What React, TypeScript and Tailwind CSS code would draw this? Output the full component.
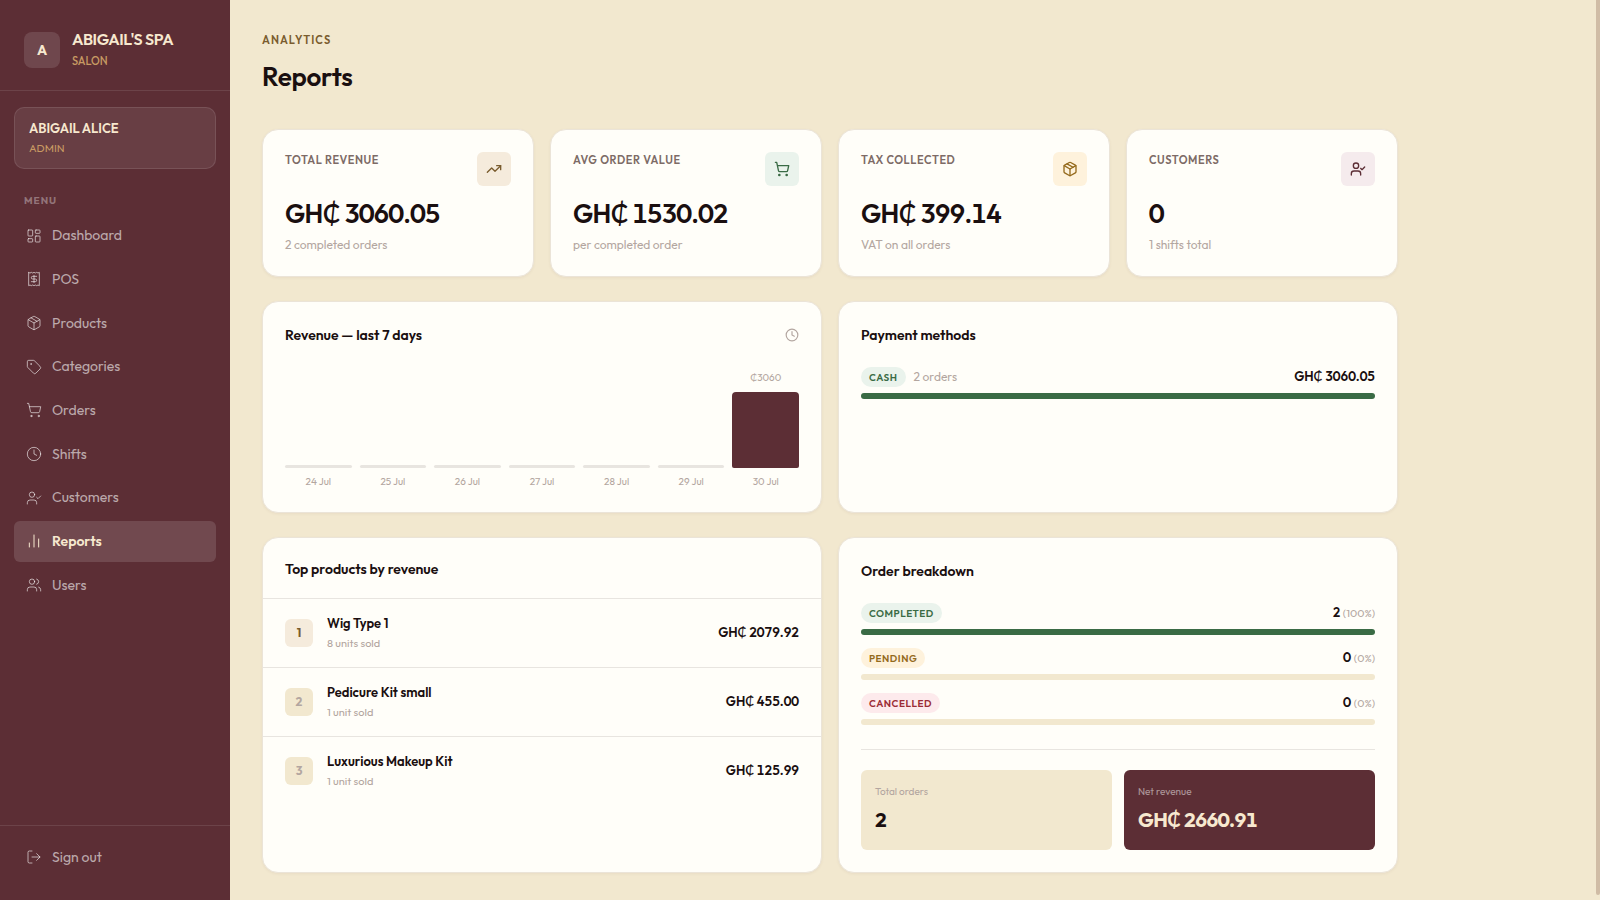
import type { LucideIcon } from 'lucide-react';
import {
  ChartNoAxesColumn,
  Clock,
  LayoutDashboard,
  LogOut,
  Package,
  Receipt,
  ShoppingCart,
  Tag,
  TrendingUp,
  UserCheck,
  Users,
} from 'lucide-react';

interface NavItem {
  label: string;
  icon: LucideIcon;
  active?: boolean;
}

const navItems: NavItem[] = [
  { label: 'Dashboard', icon: LayoutDashboard },
  { label: 'POS', icon: Receipt },
  { label: 'Products', icon: Package },
  { label: 'Categories', icon: Tag },
  { label: 'Orders', icon: ShoppingCart },
  { label: 'Shifts', icon: Clock },
  { label: 'Customers', icon: UserCheck },
  { label: 'Reports', icon: ChartNoAxesColumn, active: true },
  { label: 'Users', icon: Users },
];

const stats = [
  {
    label: 'Total revenue',
    value: 'GH₵ 3060.05',
    sub: '2 completed orders',
    icon: TrendingUp,
    tone: 'bg-[#f5ebdc] text-[#7a5c2e]',
  },
  {
    label: 'Avg order value',
    value: 'GH₵ 1530.02',
    sub: 'per completed order',
    icon: ShoppingCart,
    tone: 'bg-[#eaf3ec] text-[#3a6b45]',
  },
  {
    label: 'Tax collected',
    value: 'GH₵ 399.14',
    sub: 'VAT on all orders',
    icon: Package,
    tone: 'bg-[#fef2dc] text-[#946a1c]',
  },
  {
    label: 'Customers',
    value: '0',
    sub: '1 shifts total',
    icon: UserCheck,
    tone: 'bg-[#f5ebed] text-[#5c2e35]',
  },
];

const days = [
  { day: '24 Jul', total: 0 },
  { day: '25 Jul', total: 0 },
  { day: '26 Jul', total: 0 },
  { day: '27 Jul', total: 0 },
  { day: '28 Jul', total: 0 },
  { day: '29 Jul', total: 0 },
  { day: '30 Jul', total: 3060 },
];

const products = [
  { name: 'Wig Type 1', sold: '8 units sold', revenue: 'GH₵ 2079.92' },
  { name: 'Pedicure Kit small', sold: '1 unit sold', revenue: 'GH₵ 455.00' },
  { name: 'Luxurious Makeup Kit', sold: '1 unit sold', revenue: 'GH₵ 125.99' },
];

const statuses = [
  { label: 'Completed', count: 2, percent: 100, tone: 'bg-[#eaf3ec] text-[#3a6b45]' },
  { label: 'Pending', count: 0, percent: 0, tone: 'bg-[#fef2dc] text-[#946a1c]' },
  { label: 'Cancelled', count: 0, percent: 0, tone: 'bg-[#fdeaec] text-[#9b2c35]' },
];

const card = 'rounded-2xl border border-[#ebe4d8] bg-[#fffef9] shadow-[0_1px_3px_rgba(92,46,53,0.06)]';

function Badge({ label, tone }: { label: string; tone: string }) {
  return (
    <span className={`flex h-5 items-center rounded-full px-2 text-[10px] font-semibold uppercase tracking-wider ${tone}`}>
      {label}
    </span>
  );
}

function Bar({ percent }: { percent: number }) {
  return (
    <div className="h-1.5 overflow-hidden rounded-[3px] bg-[#f2e8cf]">
      <div className="h-full bg-[#3a6b45]" style={{ width: `${percent}%` }} />
    </div>
  );
}

function Sidebar() {
  return (
    <aside className="sticky top-0 flex h-screen w-[230px] shrink-0 flex-col bg-[#5c2e35]">
      <div className="flex items-center gap-3 border-b border-white/10 px-6 pt-7 pb-[18px]">
        <div className="flex size-9 items-center justify-center rounded-lg bg-white/12 text-[14px] font-bold text-[#f7e8cf]">
          A
        </div>
        <div>
          <div className="text-[16px] leading-[22px] font-semibold tracking-tight text-[#f7e8cf]">ABIGAIL'S SPA</div>
          <div className="text-[11px] leading-[22px] font-medium text-[#c79a63]">SALON</div>
        </div>
      </div>

      <div className="mx-3.5 mt-4 rounded-[10px] border border-white/10 bg-white/8 px-3.5 py-2.5">
        <div className="text-[13px] leading-5 font-semibold text-[#f7e8cf]">ABIGAIL ALICE</div>
        <div className="text-[11px] leading-5 text-[#c79a63]">ADMIN</div>
      </div>

      <div className="mt-6 px-6 text-[10px] leading-[15px] font-bold tracking-widest text-white/35">MENU</div>
      <nav className="mt-[7px] grid min-h-[391px] auto-rows-fr gap-0.5 px-3.5">
        {navItems.map(({ label, icon: Icon, active }) => (
          <a
            key={label}
            href="#"
            className={`flex items-center gap-2.5 rounded-md px-3 text-[14px] ${
              active ? 'bg-white/13 font-semibold text-[#f7e8cf]' : 'text-white/60'
            }`}
          >
            <Icon size={16} strokeWidth={1.5} />
            {label}
          </a>
        ))}
      </nav>

      <div className="mt-auto border-t border-white/10 px-3.5 pt-2.5 pb-[22px]">
        <button className="flex h-[42px] w-full items-center gap-2.5 rounded-md px-3 text-[14px] text-white/60">
          <LogOut size={16} strokeWidth={1.5} />
          Sign out
        </button>
      </div>
    </aside>
  );
}

function RevenueChart() {
  const max = Math.max(...days.map((d) => d.total));

  return (
    <section className={`${card} p-[22px]`}>
      <div className="flex h-[22px] items-center justify-between">
        <h2 className="text-[14px] font-semibold">Revenue — last 7 days</h2>
        <Clock size={14} strokeWidth={2} className="text-[#b3a6a0]" />
      </div>
      <div className="mt-5 flex h-[124px] items-end gap-2 text-[10px] text-[#b3a6a0]">
        {days.map(({ day, total }) => (
          <div key={day} className="flex flex-1 flex-col text-center">
            {total > 0 && <span className="mb-1.5 leading-4">₵{total}</span>}
            <div
              className={total > 0 ? 'rounded-t-[4px] rounded-b-[2px] bg-[#5c2e35]' : 'rounded-[2px] bg-[#e8e5e0]'}
              style={{ height: Math.max(3, (total / max) * 76) }}
            />
            <span className="mt-1.5 leading-4">{day}</span>
          </div>
        ))}
      </div>
    </section>
  );
}

function PaymentMethods() {
  return (
    <section className={`${card} p-[22px]`}>
      <h2 className="text-[14px] leading-[22px] font-semibold">Payment methods</h2>
      <div className="mt-[21px] mb-1.5 flex h-5 items-center gap-2">
        <Badge label="Cash" tone="bg-[#eaf3ec] text-[#3a6b45]" />
        <span className="text-[12px] text-[#b3a6a0]">2 orders</span>
        <span className="ml-auto text-[13px] font-semibold tabular-nums">GH₵ 3060.05</span>
      </div>
      <Bar percent={100} />
    </section>
  );
}

function TopProducts() {
  return (
    <section className={`${card} overflow-hidden`}>
      <h2 className="px-[22px] pt-[21px] pb-[18px] text-[14px] leading-[21px] font-semibold">Top products by revenue</h2>
      <ol>
        {products.map(({ name, sold, revenue }, i) => (
          <li key={name} className="flex items-center gap-3.5 border-t border-[#e8e5e0] px-[22px] py-3.5">
            <span
              className={`flex size-7 items-center justify-center rounded-md text-[12px] font-bold ${
                i === 0 ? 'bg-[#f5ebdc] text-[#7a5c2e]' : 'bg-[#f2e8cf] text-[#b3a6a0]'
              }`}
            >
              {i + 1}
            </span>
            <div>
              <div className="text-[13px] leading-5 font-semibold">{name}</div>
              <div className="text-[11px] leading-5 text-[#b3a6a0]">{sold}</div>
            </div>
            <span className="ml-auto text-[13px] font-semibold tabular-nums">{revenue}</span>
          </li>
        ))}
      </ol>
    </section>
  );
}

function OrderBreakdown() {
  return (
    <section className={`${card} p-[22px]`}>
      <h2 className="text-[14px] leading-[22px] font-semibold">Order breakdown</h2>
      <div className="mt-[21px] flex flex-col gap-[13px]">
        {statuses.map(({ label, count, percent, tone }) => (
          <div key={label}>
            <div className="mb-1.5 flex h-5 items-center justify-between">
              <Badge label={label} tone={tone} />
              <span className="text-[13px] font-semibold">
                {count} <span className="text-[11px] font-normal text-[#b3a6a0]">({percent}%)</span>
              </span>
            </div>
            <Bar percent={percent} />
          </div>
        ))}
      </div>
      <div className="mt-6 grid grid-cols-2 gap-3 border-t border-[#e8e5e0] pt-5">
        <div className="rounded-md bg-[#f2e8cf] px-3.5 pt-3 pb-3.5">
          <div className="text-[10px] leading-5 text-[#b3a6a0]">Total orders</div>
          <div className="mt-0.5 text-[20px] leading-8 font-bold tabular-nums">2</div>
        </div>
        <div className="rounded-md bg-[#5c2e35] px-3.5 pt-3 pb-3.5">
          <div className="text-[10px] leading-5 text-white/50">Net revenue</div>
          <div className="mt-0.5 text-[20px] leading-8 font-bold tracking-tight text-[#f7e8cf] tabular-nums">GH₵ 2660.91</div>
        </div>
      </div>
    </section>
  );
}

export default function App() {
  return (
    <div className="flex min-h-screen bg-[#f2e8cf] font-[Outfit,Lato,sans-serif] text-[#1a0f10]">
      <Sidebar />
      <main className="min-w-0 flex-1">
        <div className="max-w-[1200px] px-8 pt-[30px] pb-[27px]">
          <header className="mb-[33px]">
            <p className="text-[11px] leading-5 font-semibold tracking-widest text-[#7a5c2e]">ANALYTICS</p>
            <h1 className="mt-[7px] text-[26px] leading-[39px] font-semibold tracking-[-0.01em]">Reports</h1>
          </header>

          <div className="grid grid-cols-4 gap-4">
            {stats.map(({ label, value, sub, icon: Icon, tone }) => (
              <div key={label} className={`${card} p-[22px]`}>
                <div className="flex items-start justify-between">
                  <span className="text-[11px] leading-[17px] font-semibold tracking-wider text-[#7d6b66] uppercase">{label}</span>
                  <span className={`flex size-[34px] items-center justify-center rounded-md ${tone}`}>
                    <Icon size={16} strokeWidth={2} />
                  </span>
                </div>
                <div className="mt-2 text-[26px] leading-10 font-semibold tracking-tight tabular-nums">{value}</div>
                <div className="mt-0.5 text-[12px] leading-[18px] text-[#b3a6a0]">{sub}</div>
              </div>
            ))}
          </div>

          <div className="mt-6 grid grid-cols-2 gap-4">
            <RevenueChart />
            <PaymentMethods />
          </div>

          <div className="mt-6 grid grid-cols-2 gap-4">
            <TopProducts />
            <OrderBreakdown />
          </div>
        </div>
      </main>
      {/* Slim scroll thumb along the window edge */}
      <div className="fixed top-0 right-0 bottom-[5px] w-1 rounded-b-full bg-[#d0bca5]" />
    </div>
  );
}
